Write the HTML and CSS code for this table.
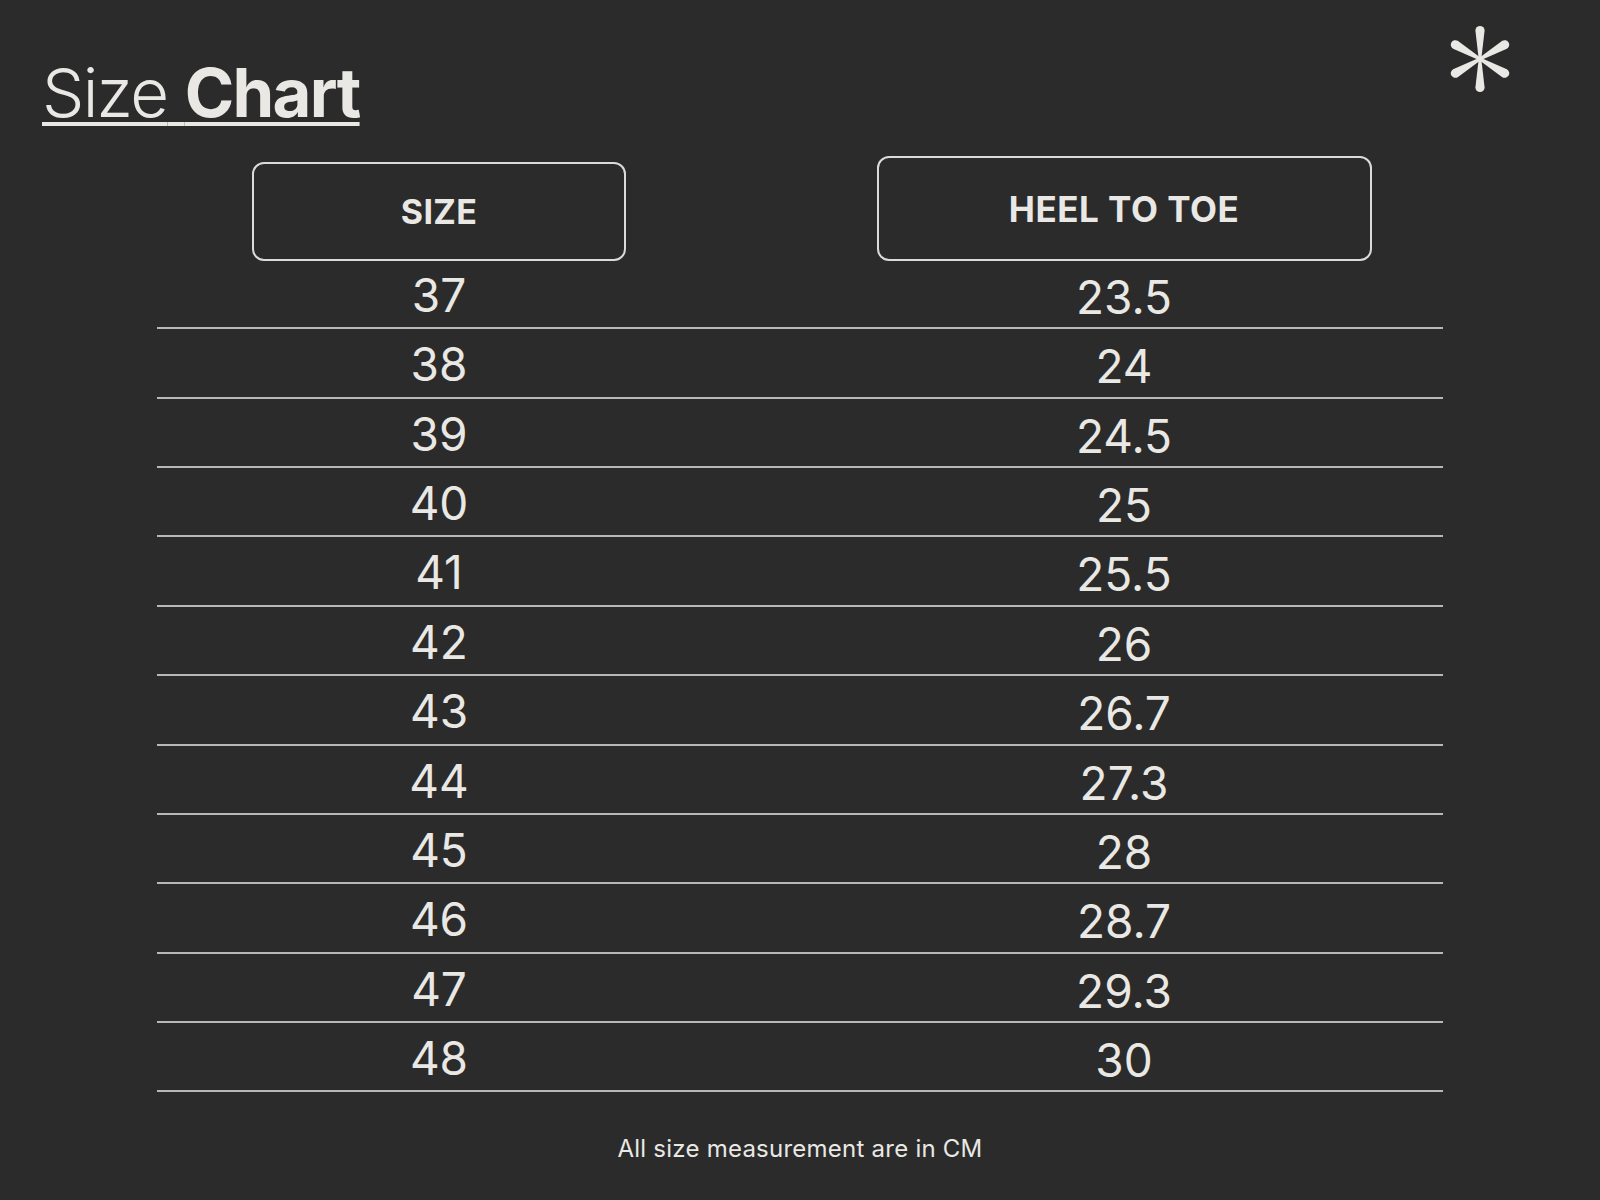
FILE: index.html
```html
<!DOCTYPE html>
<html lang="en">
<head>
<meta charset="utf-8">
<title>Size Chart</title>
<link rel="stylesheet" href="styles.css">
</head>
<body>
<div class="page">
  <header class="top">
    <h1 class="title"><span class="light">Size</span> <span class="bold">Chart</span></h1>
    <svg class="star" width="60" height="68" viewBox="-30 -34 60 68" aria-hidden="true">
      <g fill="#e9e8e4">
        <path d="M -1.3 0 L -4.6 -28.4 A 4.6 4.6 0 0 1 4.6 -28.4 L 1.3 0 Z"/>
        <path d="M -1.3 0 L -4.6 -28.4 A 4.6 4.6 0 0 1 4.6 -28.4 L 1.3 0 Z" transform="rotate(60)"/>
        <path d="M -1.3 0 L -4.6 -28.4 A 4.6 4.6 0 0 1 4.6 -28.4 L 1.3 0 Z" transform="rotate(120)"/>
        <path d="M -1.3 0 L -4.6 -28.4 A 4.6 4.6 0 0 1 4.6 -28.4 L 1.3 0 Z" transform="rotate(180)"/>
        <path d="M -1.3 0 L -4.6 -28.4 A 4.6 4.6 0 0 1 4.6 -28.4 L 1.3 0 Z" transform="rotate(240)"/>
        <path d="M -1.3 0 L -4.6 -28.4 A 4.6 4.6 0 0 1 4.6 -28.4 L 1.3 0 Z" transform="rotate(300)"/>
        <circle cx="0" cy="0" r="2.2"/>
      </g>
    </svg>
  </header>

  <section class="chart">
    <div class="head">
      <div class="hbox hbox-size">SIZE</div>
      <div class="hbox hbox-heel">HEEL TO TOE</div>
    </div>
    <div class="row"><div class="c1">37</div><div class="c2">23.5</div></div>
    <div class="row"><div class="c1">38</div><div class="c2">24</div></div>
    <div class="row"><div class="c1">39</div><div class="c2">24.5</div></div>
    <div class="row"><div class="c1">40</div><div class="c2">25</div></div>
    <div class="row"><div class="c1">41</div><div class="c2">25.5</div></div>
    <div class="row"><div class="c1">42</div><div class="c2">26</div></div>
    <div class="row"><div class="c1">43</div><div class="c2">26.7</div></div>
    <div class="row"><div class="c1">44</div><div class="c2">27.3</div></div>
    <div class="row"><div class="c1">45</div><div class="c2">28</div></div>
    <div class="row"><div class="c1">46</div><div class="c2">28.7</div></div>
    <div class="row"><div class="c1">47</div><div class="c2">29.3</div></div>
    <div class="row"><div class="c1">48</div><div class="c2">30</div></div>
  </section>

  <p class="note">All size measurement are in CM</p>
</div>
</body>
</html>
```

FILE: styles.css
```css
html, body {
  margin: 0;
  padding: 0;
}

body {
  background: #2b2b2b;
  color: #e9e8e4;
  font-family: Inter, "Noto Sans", "Liberation Sans", sans-serif;
}

.page {
  width: 1600px;
  min-height: 1200px;
}

.top {
  display: flex;
  justify-content: space-between;
  align-items: flex-start;
  padding: 25px 90px 0 42px;
}

.title {
  margin: 27px 0 0 0;
  font-size: 67px;
  line-height: 81px;
  font-weight: 350;
  letter-spacing: -0.025em;
  text-decoration: underline;
  text-decoration-thickness: 4px;
  text-underline-offset: 5px;
  text-decoration-skip-ink: none;
}

.title .light {
  font-weight: 350;
}

.title .bold {
  font-weight: 700;
}

.star {
  display: block;
}

.chart {
  width: 1286px;
  margin: 0 auto;
}

.head {
  display: grid;
  grid-template-columns: 564px 638px;
  column-gap: 84px;
  align-items: end;
  margin-top: 23px;
}

.hbox {
  justify-self: center;
  box-sizing: border-box;
  display: flex;
  align-items: center;
  justify-content: center;
  border: 2px solid #dcdbd7;
  border-radius: 12px;
  font-size: 34px;
  font-weight: 700;
  letter-spacing: 0.01em;
}

.hbox-size {
  width: 374px;
  height: 99px;
  margin-bottom: -1px;
}

.hbox-heel {
  width: 495px;
  height: 105px;
  margin-bottom: -1px;
  font-size: 35px;
  letter-spacing: 0.015em;
}

.row {
  display: grid;
  grid-template-columns: 564px 638px;
  column-gap: 84px;
  box-sizing: border-box;
  height: 69.36px;
  border-bottom: 2px solid #b9b8b4;
  font-size: 46px;
  font-weight: 400;
  line-height: 56px;
  text-align: center;
}

.c1 {
  padding-top: 7px;
}

.c2 {
  padding-top: 9px;
}

.note {
  margin: 42px 0 0 0;
  text-align: center;
  font-size: 24px;
  line-height: 29px;
  font-weight: 400;
  letter-spacing: 0.01em;
}
```
